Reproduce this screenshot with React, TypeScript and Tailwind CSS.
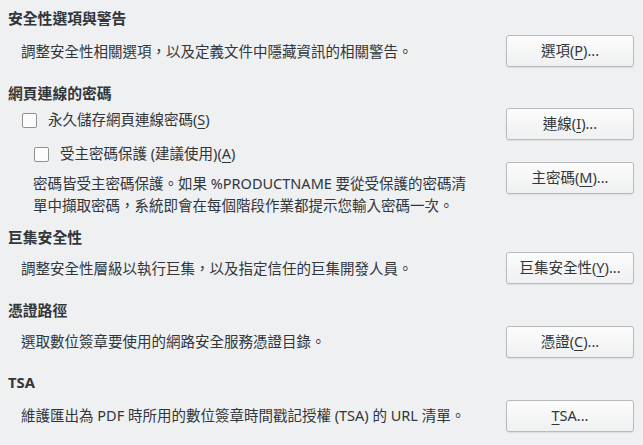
import React from 'react';

const font = { fontFamily: '"Noto Sans", "Noto Sans CJK TC", sans-serif' };

const Mn: React.FC<{ children: React.ReactNode }> = ({ children }) => (
  <span className="underline underline-offset-[3px] decoration-1">{children}</span>
);

const Btn: React.FC<{ children: React.ReactNode }> = ({ children }) => (
  <button className="w-[128px] h-[32px] shrink-0 rounded-[3px] border border-[#b8babc] bg-gradient-to-b from-[#fcfcfc] to-[#eff0f1] shadow-[0_1px_1px_rgba(0,0,0,0.08)] text-[14.5px] text-[#31363b] flex items-center justify-center">
    <span>{children}</span>
  </button>
);

const Check: React.FC<{ children: React.ReactNode }> = ({ children }) => (
  <label className="flex items-center gap-[11px] h-[24px]">
    <span className="w-[15px] h-[15px] rounded-[2px] border border-[#8e9194] bg-[#fcfcfc] shrink-0" />
    <span>{children}</span>
  </label>
);

const Heading: React.FC<{ children: React.ReactNode; className?: string }> = ({ children, className }) => (
  <h3 className={`h-[20px] leading-[20px] font-bold text-[14.8px] ${className ?? ''}`}>{children}</h3>
);

export default function App() {
  return (
    <div className="w-[643px] h-[445px] bg-[#eff0f1] text-[#31363b] text-[14.5px] pl-2 pr-[9px] pt-[8px] overflow-hidden" style={font}>
      <Heading>安全性選項與警告</Heading>
      <div className="mt-[7px] flex items-center justify-between pl-[13px]">
        <span className="pt-[2px]">調整安全性相關選項，以及定義文件中隱藏資訊的相關警告。</span>
        <Btn>選項(<Mn>P</Mn>)...</Btn>
      </div>

      <Heading className="mt-[16px]">網頁連線的密碼</Heading>
      <div className="mt-[5px] flex justify-between">
        <div className="flex flex-col">
          <div className="pl-[14px]">
            <Check>永久儲存網頁連線密碼(<Mn>S</Mn>)</Check>
          </div>
          <div className="pl-[26px] mt-[10px]">
            <Check>受主密碼保護 (建議使用)(<Mn>A</Mn>)</Check>
          </div>
          <p className="pl-[25px] mt-[6px] leading-[22px]">
            密碼皆受主密碼保護。如果 %PRODUCTNAME 要從受保護的密碼清
            <br />
            單中擷取密碼，系統即會在每個階段作業都提示您輸入密碼一次。
          </p>
        </div>
        <div className="flex flex-col gap-[22px]">
          <Btn>連線(<Mn>I</Mn>)...</Btn>
          <Btn>主密碼(<Mn>M</Mn>)...</Btn>
        </div>
      </div>

      <Heading className="mt-[11px]">巨集安全性</Heading>
      <div className="mt-[5px] flex items-center justify-between pl-[13px]">
        <span className="pt-[2px]">調整安全性層級以執行巨集，以及指定信任的巨集開發人員。</span>
        <Btn>巨集安全性(<Mn>Y</Mn>)...</Btn>
      </div>

      <Heading className="mt-[16px]">憑證路徑</Heading>
      <div className="mt-[6px] flex items-center justify-between pl-[13px]">
        <span>選取數位簽章要使用的網路安全服務憑證目錄。</span>
        <Btn>憑證(<Mn>C</Mn>)...</Btn>
      </div>

      <Heading className="mt-[14px]">TSA</Heading>
      <div className="mt-[8px] flex items-center justify-between pl-[13px]">
        <span>維護匯出為 PDF 時所用的數位簽章時間戳記授權 (TSA) 的 URL 清單。</span>
        <Btn><Mn>T</Mn>SA...</Btn>
      </div>
    </div>
  );
}
